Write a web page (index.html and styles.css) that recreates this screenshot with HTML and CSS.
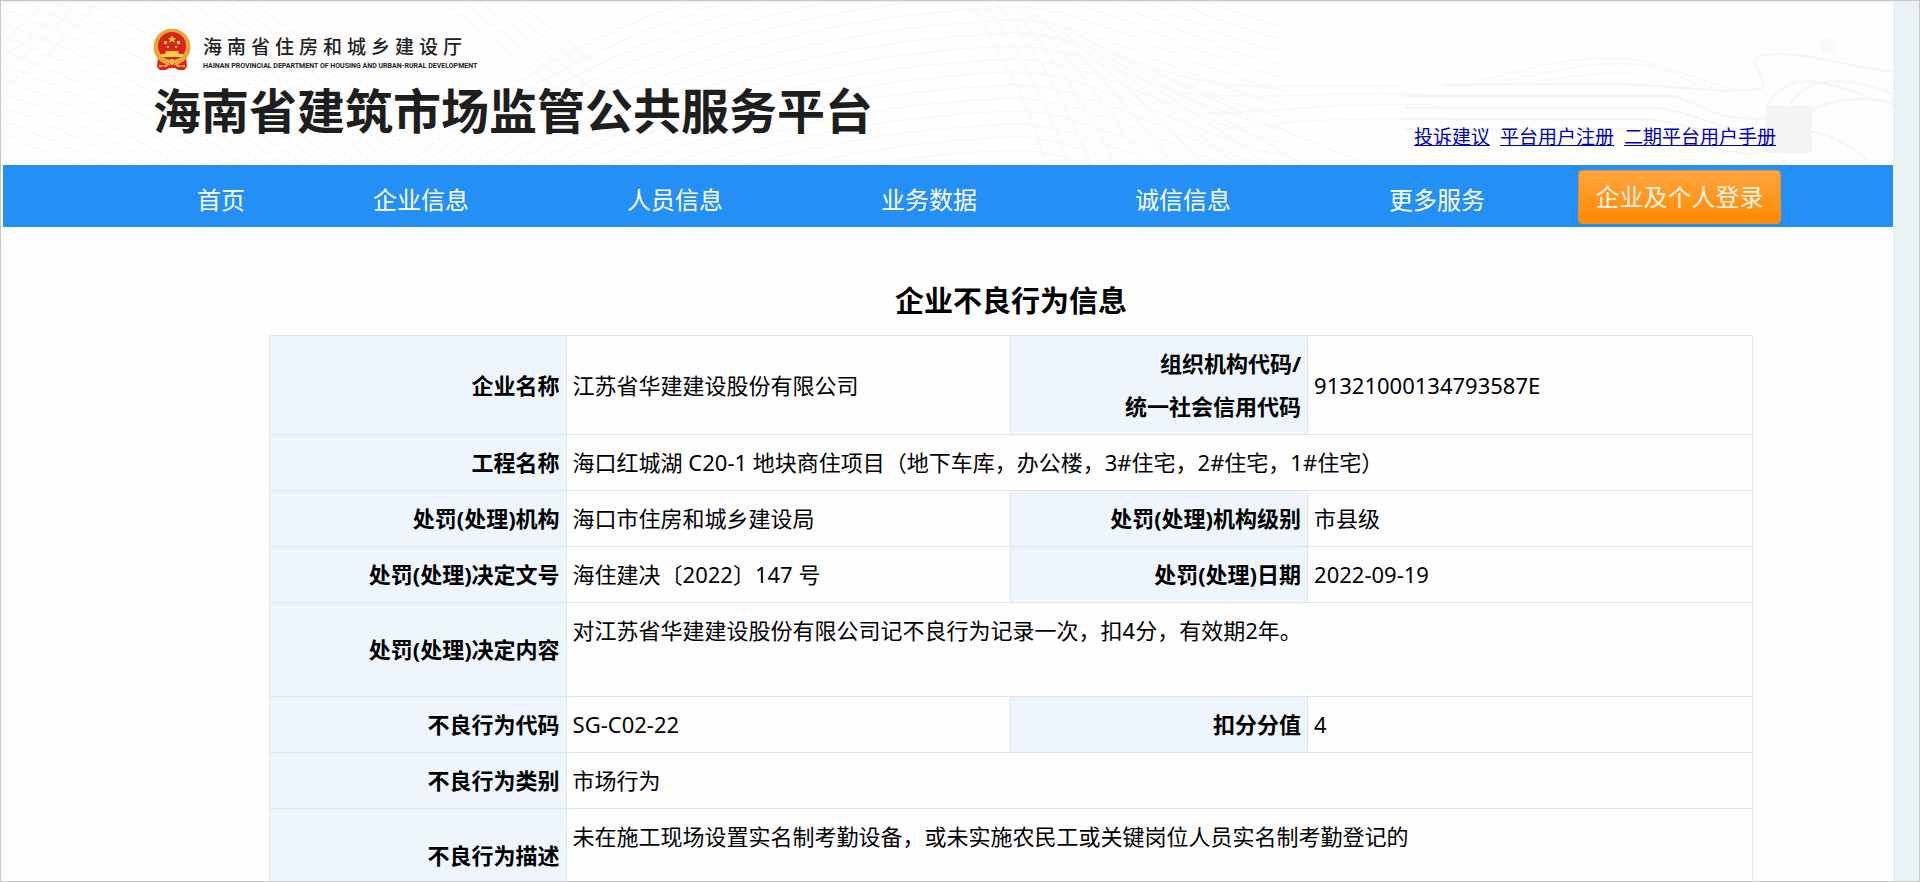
FILE: index.html
```html
<!DOCTYPE html>
<html lang="zh-CN">
<head>
<meta charset="utf-8">
<title>海南省建筑市场监管公共服务平台</title>
<link rel="stylesheet" href="styles.css">
</head>
<body>
<div class="frame">
  <div class="page">
    <header class="header">
      <svg class="header-art" viewBox="0 0 1890 163" preserveAspectRatio="xMidYMin slice" aria-hidden="true" fill="none">
        <defs>
          <path id="slope" d="M-20 0C130 50 260 140 420 270"/>
          <path id="rise" d="M420 210C560 90 760 10 1010 0C1090 0 1180 60 1280 84"/>
          <g id="slopes"><use href="#slope"/><use href="#slope" y="14"/><use href="#slope" y="28"/><use href="#slope" y="42"/><use href="#slope" y="56"/></g>
          <g id="rises"><use href="#rise"/><use href="#rise" y="13"/><use href="#rise" y="26"/><use href="#rise" y="39"/><use href="#rise" y="52"/></g>
        </defs>
        <g stroke="#f8faf9" stroke-width="2">
          <use href="#slopes" y="-140"/><use href="#slopes" y="-70"/><use href="#slopes"/><use href="#slopes" y="70"/>
          <use href="#slopes" x="170" y="-210"/>
          <path d="M-10 90Q60 50 100-10M-10 75Q45 45 80-10M-10 60Q40 35 65-10M-10 45Q25 25 45-10"/>
        </g>
        <g stroke="#f9f9f9" stroke-width="2">
          <use href="#rises" y="-60"/><use href="#rises" y="5"/><use href="#rises" y="70"/><use href="#rises" y="135"/>
        </g>
        <g stroke="#f9f9f9" stroke-width="2">
          <path d="M966 0Q1020 80 1045 170M980 0Q1040 80 1067 170M994 0Q1058 80 1090 170M1008 4Q1076 84 1116 170M1022 10Q1100 90 1144 170M1038 18Q1124 96 1174 170M1056 27Q1150 104 1206 170M1076 38Q1176 112 1240 170M1098 50Q1206 120 1276 170M1124 62Q1240 128 1314 170M1154 72Q1280 130 1360 160"/>
          <path d="M1010 4C1100 40 1160 88 1270 84H1400M1180 90C1260 100 1320 88 1420 92M1200 112C1290 108 1340 100 1440 104M1220 128C1290 118 1350 116 1440 116"/>
        </g>
        <g stroke="#f5f5f5" stroke-width="2">
          <path d="M1440 83C1500 83 1560 82 1600 82C1670 82 1700 92 1758 87C1766 74 1744 64 1756 54C1790 46 1840 64 1890 70"/>
          <path d="M1400 94H1670C1700 102 1710 120 1764 116M1400 106H1650C1690 108 1715 130 1764 130M1400 117H1640C1690 120 1710 138 1764 140M1400 127H1610C1690 128 1700 150 1750 152"/>
          <path d="M1764 104C1790 60 1830 84 1890 103M1786 106C1800 70 1850 76 1890 92M1806 108C1840 94 1860 96 1890 100M1806 130Q1830 130 1868 160"/>
          <path stroke="#f9f9f9" d="M1470 80C1530 66 1560 56 1610 56S1690 80 1730 86M1490 81C1550 70 1570 62 1620 62S1680 82 1710 86M1510 82C1560 76 1590 70 1630 72"/>
        </g>
        <rect x="1763" y="103" width="46" height="48" rx="3" fill="#f5f5f5"/>
        <path fill="#fafafa" d="M1817 35h15v15h-15z"/>
      </svg>
      <div class="header-inner">
        <div class="brand">
          <div class="org">
            <svg class="emblem" viewBox="0 0 38 42" role="img" aria-label="国徽">
              <path fill="#d9231b" d="M5 27L33 27L34 38L31 41H25L22 39H16L13 41H7L4 38z"/>
              <circle cx="19" cy="18" r="18.500" fill="#e6a63a"/>
              <circle cx="19" cy="17" r="14" fill="#dc2318"/>
              <path fill="#f5cf45" d="M19 6l1 3h3l-2 2 1 3-3-2-3 2 1-3-2-2h3zM11 12h3v3h-3zM24 12h3v3h-3zM14 17h2v2h-2zM22 17h2v2h-2zM13 22h12l1 3h4v3H8v-3h4z"/>
              <path fill="none" stroke="#e8ae3f" stroke-width="2" d="M7 29Q19 36 31 29M6 37h7l3-3h6l3 3h7"/>
              <circle cx="19" cy="33" r="3" fill="#f0bd45"/>
              <path stroke="#d9231b" stroke-width="1" d="M10 40v-4M28 40v-4M16 34l3 3 3-3" fill="none"/>
            </svg>
            <div class="org-names">
              <span class="org-cn">海南省住房和城乡建设厅</span>
              <span class="org-en">HAINAN PROVINCIAL DEPARTMENT OF HOUSING AND URBAN-RURAL DEVELOPMENT</span>
            </div>
          </div>
          <h1 class="site-title">海南省建筑市场监管公共服务平台</h1>
        </div>
        <div class="links">
          <a href="#">投诉建议</a>
          <a href="#">平台用户注册</a>
          <a href="#">二期平台用户手册</a>
        </div>
      </div>
    </header>
    <nav class="nav">
      <a href="#">首页</a>
      <a href="#">企业信息</a>
      <a href="#">人员信息</a>
      <a href="#">业务数据</a>
      <a href="#">诚信信息</a>
      <a href="#">更多服务</a>
      <button class="login" type="button">企业及个人登录</button>
    </nav>
    <main class="content">
      <h2 class="title">企业不良行为信息</h2>
      <table class="info">
        <colgroup><col class="c-label"><col class="c-value"><col class="c-label"><col class="c-value"></colgroup>
        <tbody>
          <tr><th scope="row">企业名称</th><td>江苏省华建建设股份有限公司</td><th scope="row">组织机构代码/<br>统一社会信用代码</th><td>91321000134793587E</td></tr>
          <tr><th scope="row">工程名称</th><td colspan="3">海口红城湖 C20-1 地块商住项目（地下车库，办公楼，3#住宅，2#住宅，1#住宅）</td></tr>
          <tr><th scope="row">处罚(处理)机构</th><td>海口市住房和城乡建设局</td><th scope="row">处罚(处理)机构级别</th><td>市县级</td></tr>
          <tr><th scope="row">处罚(处理)决定文号</th><td>海住建决〔2022〕147 号</td><th scope="row">处罚(处理)日期</th><td>2022-09-19</td></tr>
          <tr class="tall"><th scope="row">处罚(处理)决定内容</th><td colspan="3">对江苏省华建建设股份有限公司记不良行为记录一次，扣4分，有效期2年。</td></tr>
          <tr><th scope="row">不良行为代码</th><td>SG-C02-22</td><th scope="row">扣分分值</th><td>4</td></tr>
          <tr><th scope="row">不良行为类别</th><td colspan="3">市场行为</td></tr>
          <tr class="tall"><th scope="row">不良行为描述</th><td colspan="3">未在施工现场设置实名制考勤设备，或未实施农民工或关键岗位人员实名制考勤登记的</td></tr>
        </tbody>
      </table>
    </main>
  </div>
  <div class="gutter"></div>
</div>
</body>
</html>
```
FILE: styles.css
```css
* {
  box-sizing: border-box;
}

body {
  margin: 0;
  background: #fff;
  color: #000;
  font-family: "Noto Sans", "Noto Sans CJK SC", sans-serif;
}

.frame {
  display: flex;
  height: 100vh;
  overflow: hidden;
  border: 1px solid #c8c8c8;
}

.page {
  flex: 1;
  min-width: 0;
  padding-left: 2px;
  background: #fefefe;
}

.gutter {
  width: 26px;
  background: #eaf1f3;
}

.header {
  position: relative;
  border-top: 1px solid #ececec;
}

.header-art {
  position: absolute;
  inset: 0;
  width: 100%;
  height: 100%;
}

.header-inner {
  position: relative;
  display: flex;
  justify-content: space-between;
  align-items: flex-end;
  height: 163px;
  padding: 0 117px 16px 150px;
}

.brand {
  padding-bottom: 6px;
}

.org {
  display: flex;
  gap: 12px;
  align-items: center;
}

.emblem {
  width: 38px;
  height: 42px;
}

.org-names {
  display: flex;
  flex-direction: column;
  gap: 4px;
  padding-top: 4px;
}

.org-cn {
  font-size: 19px;
  line-height: 24px;
  font-weight: 500;
  letter-spacing: 5px;
  color: #222;
  font-family: "Noto Sans CJK SC", sans-serif;
}

.org-en {
  font: 700 7px/8px Roboto, sans-serif;
  color: #222;
}

.site-title {
  margin: 8px 0 0;
  font-size: 48px;
  line-height: 64px;
  font-weight: 700;
  color: #1e1e1e;
}

.links {
  display: flex;
  gap: 10px;
  font-size: 19px;
  line-height: 24px;
}

.links a {
  color: #0000b4;
}

.nav {
  display: grid;
  grid-template-columns: 146px repeat(5, 1fr) auto;
  align-items: center;
  height: 62px;
  padding: 0 112px 0 145px;
  background: #248ff5;
}

.nav a {
  color: #fff;
  font-size: 24px;
  line-height: 32px;
  text-align: center;
  text-decoration: none;
  padding-top: 8px;
}

.login {
  width: 203px;
  height: 54px;
  margin: 2px 0 0 14px;
  padding: 0 0 4px;
  border: 1px solid #dd9040;
  border-radius: 4px;
  background: linear-gradient(#ffa640, #ff8800);
  color: #fff5e6;
  font-family: inherit;
  font-size: 24px;
}

.content {
  padding: 56px 140px 0 266px;
}

.title {
  margin: 0 0 16px;
  font-size: 29px;
  line-height: 36px;
  text-align: center;
}

.info {
  width: 100%;
  table-layout: fixed;
  border-collapse: collapse;
  font-size: 22px;
  line-height: 43px;
}

.c-label {
  width: 20%;
}

.c-value {
  width: 30%;
}

.info th,
.info td {
  padding: 6px;
  border: 1px solid #e2e4e6;
}

.info th {
  background: #eff5fd;
  text-align: right;
}

.info .tall {
  height: 94px;
}

.info .tall td {
  vertical-align: top;
}
```
